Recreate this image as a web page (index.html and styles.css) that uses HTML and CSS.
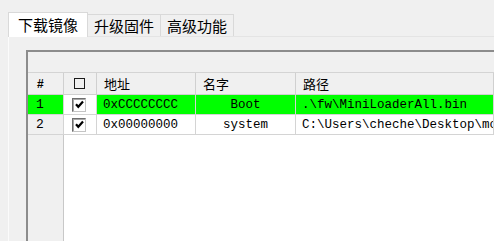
FILE: index.html
```html
<!DOCTYPE html>
<html lang="zh-CN">
<head>
  <meta charset="UTF-8">
  <title>下载镜像</title>
  <link rel="stylesheet" href="styles.css">
</head>
<body>

  <!-- Tab strip -->
  <div class="tabs">
    <div class="tab active">下载镜像</div>
    <div class="tab">升级固件</div>
    <div class="tab">高级功能</div>
  </div>

  <div class="panel">
    <div class="list">
      <div class="band"></div>

      <div class="row head">
        <div class="cell num">#</div>
        <div class="cell chk"><span class="box-empty"></span></div>
        <div class="cell">地址</div>
        <div class="cell">名字</div>
        <div class="cell">路径</div>
      </div>

      <div class="row item on">
        <div class="cell num">1</div>
        <div class="cell chk">
          <span class="box"><svg viewBox="0 0 11 11" width="11" height="11"><path d="M2 5.2 L4.3 7.8 L9 2.6" fill="none" stroke="#000" stroke-width="2.2"/></svg></span>
        </div>
        <div class="cell mono">0xCCCCCCCC</div>
        <div class="cell mono center">Boot</div>
        <div class="cell mono">.\fw\MiniLoaderAll.bin</div>
      </div>

      <div class="row item">
        <div class="cell num">2</div>
        <div class="cell chk">
          <span class="box"><svg viewBox="0 0 11 11" width="11" height="11"><path d="M2 5.2 L4.3 7.8 L9 2.6" fill="none" stroke="#000" stroke-width="2.2"/></svg></span>
        </div>
        <div class="cell mono">0x00000000</div>
        <div class="cell mono center">system</div>
        <div class="cell mono">C:\Users\cheche\Desktop\mo</div>
      </div>

      <div class="filler">
        <div class="filler-num"></div>
      </div>
    </div>
  </div>

</body>
</html>
```

FILE: styles.css
```css
* {
  box-sizing: border-box;
}

html, body {
  height: 100%;
}

body {
  margin: 0;
  background: #f0f0f0;
  color: #000;
  font-family: "Noto Sans CJK SC", "Noto Sans", sans-serif;
  overflow: hidden;
  display: flex;
  flex-direction: column;
}

/* tabs */
.tabs {
  display: flex;
  align-items: flex-end;
  padding: 12px 0 0 8px;
  height: 37px;
}

.tab {
  height: 23px;
  padding: 0 6px;
  font-size: 15px;
  line-height: 22px;
  background: #f0f0f0;
  border: 1px solid #d9d9d9;
  border-bottom: none;
  margin-left: -1px;
  white-space: nowrap;
}

.tab.active {
  height: 25px;
  padding: 0 9px;
  line-height: 24px;
  background: #fff;
  margin-left: 0;
  position: relative;
  z-index: 1;
}

/* panel */
.panel {
  flex: 1;
  display: flex;
  padding: 13px 0 0 17px;
  border-left: 1px solid #fbfbfb;
  margin-left: 8px;
  margin-top: -1px;
  border-top: 1px solid #e4e4e4;
}

.list {
  flex: 1;
  display: flex;
  flex-direction: column;
  background: #fff;
  border-left: 2px solid #8c8c8c;
  border-top: 2px solid #8c8c8c;
  overflow: hidden;
}

.band {
  height: 21px;
  flex: none;
  background: #f0f0f0;
  border-bottom: 1px solid #d4d4d4;
}

.row {
  display: grid;
  grid-template-columns: 36px 33px 99px 100px 1fr;
  height: 20px;
  flex: none;
}

.row.head {
  height: 22px;
  background: #f0f0f0;
  font-size: 13px;
}

.cell {
  border-right: 1px solid #d4d4d4;
  border-bottom: 1px solid #d4d4d4;
  padding-left: 7px;
  white-space: nowrap;
  overflow: hidden;
  display: flex;
  align-items: center;
}

.head .cell {
  border-color: #d0d0d0;
  background: #f0f0f0;
}

.head .num {
  padding-left: 9px;
  font-family: "Liberation Sans", sans-serif;
  font-weight: bold;
  font-size: 12px;
}

.item .cell {
  font-size: 13px;
}

.item .num {
  padding-left: 8px;
  font-family: "Liberation Mono", monospace;
  font-size: 13px;
  background: #f0f0f0;
}

.chk {
  padding-left: 8px;
  background: #fff;
}

.head .chk {
  padding-left: 10px;
}

.box-empty {
  width: 11px;
  height: 11px;
  border: 1.5px solid #1a1a1a;
}

.box {
  width: 14px;
  height: 14px;
  border: 1px solid #6e6e6e;
  border-right-color: #c4c4c4;
  border-bottom-color: #c4c4c4;
  box-shadow: inset 1px 1px 0 #a8a8a8;
  background: #fff;
  display: flex;
  align-items: center;
  justify-content: center;
}

.mono {
  font-family: "Liberation Mono", monospace;
  font-size: 12.5px !important;
  padding-left: 6px;
}

.center {
  justify-content: center;
  padding-left: 0;
}

.item.on .cell {
  background: #00ff00;
}

.item.on .chk {
  background: #fff;
}

.filler {
  flex: 1;
  display: flex;
}

.filler-num {
  width: 36px;
  background: #f0f0f0;
  border-right: 1px solid #c8c8c8;
}
```
